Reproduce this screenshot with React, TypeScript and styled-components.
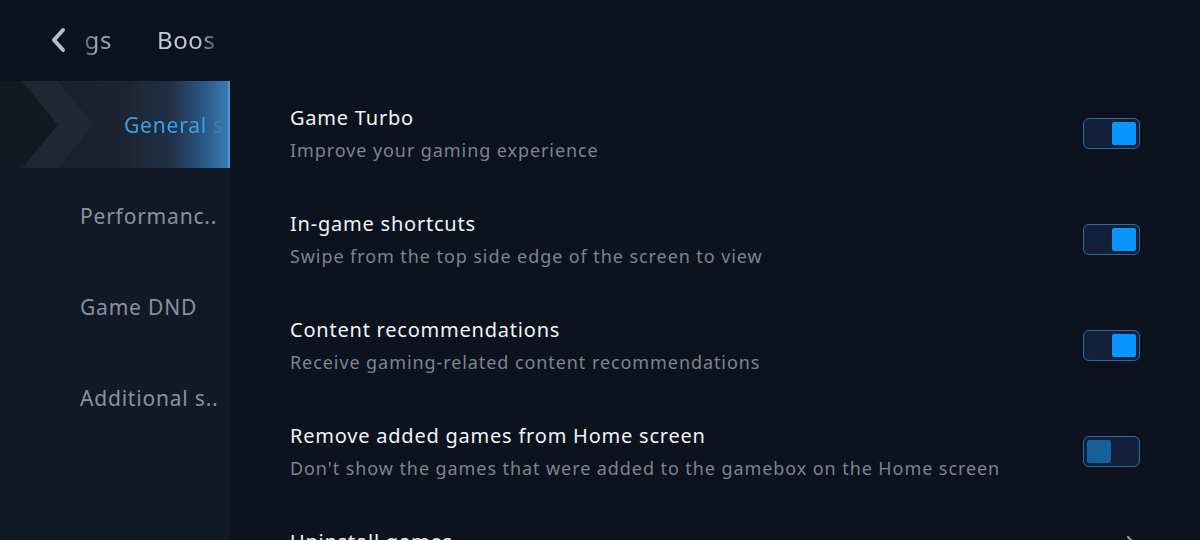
import React from "react";
import styled, { createGlobalStyle } from "styled-components";

const Global = createGlobalStyle`
  html, body { margin: 0; padding: 0; background: #0c121e; }
  body { font-family: "Noto Sans", "Open Sans", sans-serif; }
  * { box-sizing: border-box; }
`;

const Page = styled.div`
  width: 1200px;
  height: 540px;
  display: flex;
  flex-direction: column;
  background: #0c121e;
  overflow: hidden;
`;

const Header = styled.div`
  height: 81px;
  flex: none;
  display: flex;
  align-items: center;
  padding-left: 48px;
  padding-bottom: 2px;
  color: #c3c8d4;
  font-size: 24px;
  letter-spacing: 0.6px;
`;

const Back = styled.div`
  width: 20px;
  height: 26px;
  display: flex;
  align-items: center;
  justify-content: center;
  margin-right: 17px;
`;

const Crumb = styled.div<{ $w: number; $fade: "left" | "right" }>`
  width: ${(p) => p.$w}px;
  overflow: hidden;
  white-space: nowrap;
  display: flex;
  justify-content: ${(p) => (p.$fade === "left" ? "flex-end" : "flex-start")};
  color: ${(p) => (p.$fade === "left" ? "#9ba1ae" : "#c3c8d6")};
  -webkit-mask-image: ${(p) =>
    p.$fade === "left"
      ? "linear-gradient(to right, rgba(0,0,0,0.55), #000 40%)"
      : "linear-gradient(to right, #000 72%, rgba(0,0,0,0.35))"};
  mask-image: ${(p) =>
    p.$fade === "left"
      ? "linear-gradient(to right, rgba(0,0,0,0.55), #000 40%)"
      : "linear-gradient(to right, #000 72%, rgba(0,0,0,0.35))"};
  margin-right: ${(p) => (p.$fade === "left" ? 45 : 0)}px;
`;

const Body = styled.div`
  flex: 1;
  display: flex;
  min-height: 0;
`;

const Sidebar = styled.nav`
  width: 230px;
  flex: none;
  background: #121926;
  display: flex;
  flex-direction: column;
  gap: 4px;
`;

const NavItem = styled.div<{ $active?: boolean }>`
  position: relative;
  height: 87px;
  flex: none;
  display: flex;
  align-items: center;
  padding-left: ${(p) => (p.$active ? 124 : 80)}px;
  padding-right: ${(p) => (p.$active ? 6 : 0)}px;
  font-size: 21px;
  letter-spacing: 0.8px;
  white-space: nowrap;
  overflow: hidden;
  color: ${(p) => (p.$active ? "#3ba0ec" : "#8a909c")};
  background: ${(p) =>
    p.$active
      ? "linear-gradient(to right, #161b25 0%, #1c2431 55%, #213047 75%, #2c5a87 90%, #3a7ab4 100%)"
      : "transparent"};
  border-right: ${(p) => (p.$active ? "2px solid #4b9be0" : "none")};
`;

const NavDeco = styled.svg`
  position: absolute;
  left: 0;
  top: 0;
`;

const NavLabel = styled.span<{ $fade?: boolean }>`
  position: relative;
  display: block;
  overflow: hidden;
  -webkit-mask-image: ${(p) =>
    p.$fade ? "linear-gradient(to right, #000 80%, rgba(0,0,0,0.2))" : "none"};
  mask-image: ${(p) =>
    p.$fade ? "linear-gradient(to right, #000 80%, rgba(0,0,0,0.2))" : "none"};
`;

const Main = styled.main`
  flex: 1;
  display: flex;
  flex-direction: column;
  padding: 0 60px 0 60px;
  min-width: 0;
`;

const Row = styled.div`
  flex: none;
  display: flex;
  align-items: center;
  justify-content: space-between;
  padding: 24px 0 25px;
`;

const Texts = styled.div`
  display: flex;
  flex-direction: column;
  gap: 7px;
`;

const Title = styled.div`
  font-size: 20px;
  line-height: 26px;
  letter-spacing: 0.78px;
  color: #f2f4f7;
`;

const Subtitle = styled.div`
  font-size: 18px;
  line-height: 24px;
  letter-spacing: 0.92px;
  color: #7d8390;
`;

const Toggle = styled.div<{ $on: boolean }>`
  width: 57px;
  height: 31px;
  flex: none;
  border: 1px solid #32699c;
  border-radius: 6px;
  background: #13203a;
  display: flex;
  padding: 3px;
  justify-content: ${(p) => (p.$on ? "flex-end" : "flex-start")};
  margin-top: -1px;
`;

const Thumb = styled.div<{ $on: boolean }>`
  width: 24px;
  height: 23px;
  border-radius: 2px;
  background: ${(p) => (p.$on ? "#0b96ff" : "#17609c")};
`;

const Arrow = styled.div`
  align-self: flex-start;
  margin-top: 6px;
  margin-right: 4px;
  display: flex;
`;

const items = [
  { title: "Game Turbo", sub: "Improve your gaming experience", on: true },
  { title: "In-game shortcuts", sub: "Swipe from the top side edge of the screen to view", on: true },
  { title: "Content recommendations", sub: "Receive gaming-related content recommendations", on: true },
  {
    title: "Remove added games from Home screen",
    sub: "Don't show the games that were added to the gamebox on the Home screen",
    on: false,
  },
];

export default function App() {
  return (
    <Page>
      <Global />
      <Header>
        <Back>
          <svg width="18" height="26" viewBox="0 0 18 26">
            <path d="M14 3 L5 13 L14 23" fill="none" stroke="#b9bdc8" strokeWidth="4" strokeLinecap="round" strokeLinejoin="round" />
          </svg>
        </Back>
        <Crumb $w={27} $fade="left">Settings</Crumb>
        <Crumb $w={58} $fade="right">Boost</Crumb>
      </Header>
      <Body>
        <Sidebar>
          <NavItem $active>
            <NavDeco width="110" height="87" viewBox="0 0 110 87">
              <polygon points="0,0 22,0 58,44 22,87 0,87" fill="#131822" opacity="0.9" />
              <polygon points="22,0 58,0 93,44 58,87 22,87 58,44" fill="#222935" opacity="0.8" />
            </NavDeco>
            <NavLabel $fade>General settings</NavLabel>
          </NavItem>
          <NavItem>
            <NavLabel>Performanc..</NavLabel>
          </NavItem>
          <NavItem>
            <NavLabel>Game DND</NavLabel>
          </NavItem>
          <NavItem>
            <NavLabel>Additional s..</NavLabel>
          </NavItem>
        </Sidebar>
        <Main>
          {items.map((it) => (
            <Row key={it.title}>
              <Texts>
                <Title>{it.title}</Title>
                <Subtitle>{it.sub}</Subtitle>
              </Texts>
              <Toggle $on={it.on}>
                <Thumb $on={it.on} />
              </Toggle>
            </Row>
          ))}
          <Row>
            <Texts>
              <Title>Uninstall games</Title>
              <Subtitle>Remove games from the gamebox</Subtitle>
            </Texts>
            <Arrow>
              <svg width="10" height="16" viewBox="0 0 10 16">
                <path d="M2 2 L8 8 L2 14" fill="none" stroke="#9aa0ab" strokeWidth="2" strokeLinecap="round" strokeLinejoin="round" />
              </svg>
            </Arrow>
          </Row>
        </Main>
      </Body>
    </Page>
  );
}
